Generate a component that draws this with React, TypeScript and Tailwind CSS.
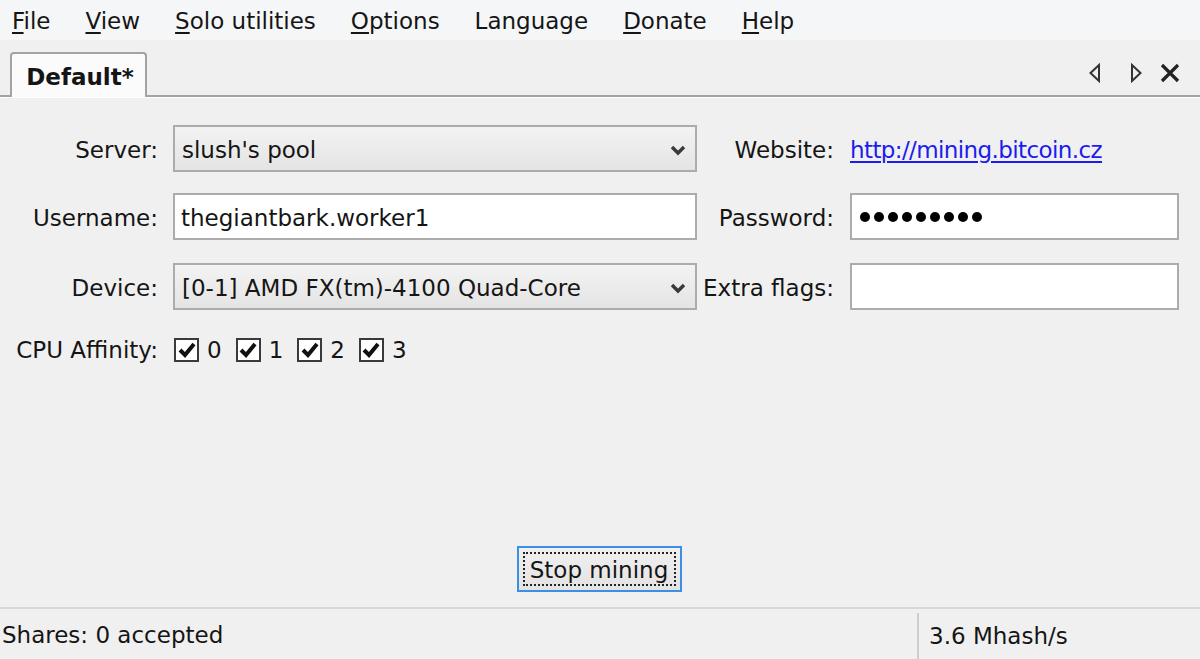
import React from "react";

const menuItems = [
  { key: "F", rest: "ile" },
  { key: "V", rest: "iew" },
  { key: "S", rest: "olo utilities" },
  { key: "O", rest: "ptions" },
  { key: "", rest: "Language" },
  { key: "D", rest: "onate" },
  { key: "H", rest: "elp" },
];

const Chevron = () => (
  <svg width="16" height="12" viewBox="0 0 16 12" className="shrink-0">
    <path d="M2 3 L8 9 L14 3" fill="none" stroke="#3a3a3a" strokeWidth="3.4" />
  </svg>
);

const Select = ({ value }: { value: string }) => (
  <div className="w-[524px] h-[47px] flex items-center justify-between pl-[7px] pr-[9px] pt-[3px] border-2 border-[#acacac] bg-gradient-to-b from-[#f3f3f3] to-[#e4e4e4]">
    <span>{value}</span>
    <Chevron />
  </div>
);

const CheckBox = ({ label }: { label: string }) => (
  <div className="flex items-center gap-[8px] mr-[14px]">
    <div className="w-[25px] h-[24px] border-2 border-[#3a3a3a] bg-white flex items-center justify-center">
      <svg width="18" height="16" viewBox="0 0 18 16">
        <path d="M2 8 L7 13 L16 2" fill="none" stroke="#111" strokeWidth="4" />
      </svg>
    </div>
    <span className="pt-[2px]">{label}</span>
  </div>
);

const App = () => {
  return (
    <div className="w-[1200px] h-[659px] bg-[#f0f0f0] flex flex-col overflow-hidden text-[23px] text-[#151515] font-['DejaVu_Sans',sans-serif]">
      {/* menu */}
      <div className="h-[40px] bg-[#f5f6f7] flex items-center gap-[35px] pl-[12px] pt-[2px]">
        {menuItems.map((m) => (
          <span key={m.rest}>
            {m.key && <span className="underline underline-offset-[3px]">{m.key}</span>}
            {m.rest}
          </span>
        ))}
      </div>

      {/* tabs */}
      <div className="h-[57px] flex items-end justify-between border-b-2 border-[#a3a3a3]">
        <div className="ml-[10px] w-[137px] h-[45px] -mb-[2px] bg-[#fbfbfb] border-2 border-b-0 border-[#a3a3a3] rounded-t-[4px] flex items-center justify-center pl-[3px] pt-[3px] font-bold">
          Default*
        </div>
        <div className="self-center flex items-center pr-[20px] mt-[10px]">
          <svg width="14" height="20" viewBox="0 0 14 20" className="mr-[27px]">
            <path d="M11 2 L2.5 10 L11 18 Z" fill="none" stroke="#333" strokeWidth="2" />
          </svg>
          <svg width="14" height="20" viewBox="0 0 14 20" className="mr-[17px]">
            <path d="M3 2 L11.5 10 L3 18 Z" fill="none" stroke="#333" strokeWidth="2" />
          </svg>
          <svg width="20" height="20" viewBox="0 0 20 20">
            <path d="M2 2 L18 18 M18 2 L2 18" stroke="#222" strokeWidth="3.2" />
          </svg>
        </div>
      </div>

      {/* panel */}
      <div className="flex-1 flex flex-col border-t border-white pt-[27px]">
        <div className="flex items-center h-[47px]">
          <div className="w-[158px] text-right mr-[15px] pt-[3px]">Server:</div>
          <Select value="slush's pool" />
          <div className="w-[137px] text-right mr-[16px] pt-[3px]">Website:</div>
          <a href="#" className="pt-[3px] text-[#1c1cee] underline underline-offset-[3px] tracking-[-0.6px]">
            http://mining.bitcoin.cz
          </a>
        </div>

        <div className="flex items-center h-[47px] mt-[21px]">
          <div className="w-[158px] text-right mr-[15px] pt-[3px]">Username:</div>
          <div className="w-[524px] h-[47px] flex items-center pl-[6px] pt-[3px] border-2 border-[#acacac] bg-white">
            thegiantbark.worker1
          </div>
          <div className="w-[137px] text-right mr-[16px] pt-[3px]">Password:</div>
          <div className="w-[329px] h-[47px] flex items-center gap-[4px] pl-[8px] border-2 border-[#acacac] bg-white">
            {Array.from({ length: 9 }).map((_, i) => (
              <span key={i} className="w-[10px] h-[10px] rounded-full bg-black" />
            ))}
          </div>
        </div>

        <div className="flex items-center h-[47px] mt-[23px]">
          <div className="w-[158px] text-right mr-[15px] pt-[3px]">Device:</div>
          <Select value="[0-1] AMD FX(tm)-4100 Quad-Core" />
          <div className="w-[137px] text-right mr-[16px] pt-[3px]">Extra flags:</div>
          <div className="w-[329px] h-[47px] border-2 border-[#acacac] bg-white" />
        </div>

        <div className="flex items-center h-[47px] mt-[16px]">
          <div className="w-[158px] text-right mr-[16px] pt-[2px]">CPU Affinity:</div>
          <CheckBox label="0" />
          <CheckBox label="1" />
          <CheckBox label="2" />
          <CheckBox label="3" />
        </div>

        <div className="flex-1" />
        <div className="flex justify-center mb-[15px] pr-[2px]">
          <div className="w-[165px] h-[46px] border-2 border-[#3c8fe6] bg-gradient-to-b from-[#f0f0f0] to-[#e3e3e3] p-[4px]">
            <div className="w-full h-full border-2 border-dotted border-[#222] flex items-center justify-center pt-[2px]">
              Stop mining
            </div>
          </div>
        </div>
      </div>

      {/* status bar */}
      <div className="h-[52px] border-t-2 border-[#d8d8d8] flex items-stretch">
        <div className="w-[917px] flex items-center pl-[2px] pt-[3px]">Shares: 0 accepted</div>
        <div className="flex-1 flex items-center pl-[10px] pt-[1px] border-l-2 border-[#cfcfcf] mt-[4px]">
          3.6 Mhash/s
        </div>
      </div>
    </div>
  );
};

export default App;
